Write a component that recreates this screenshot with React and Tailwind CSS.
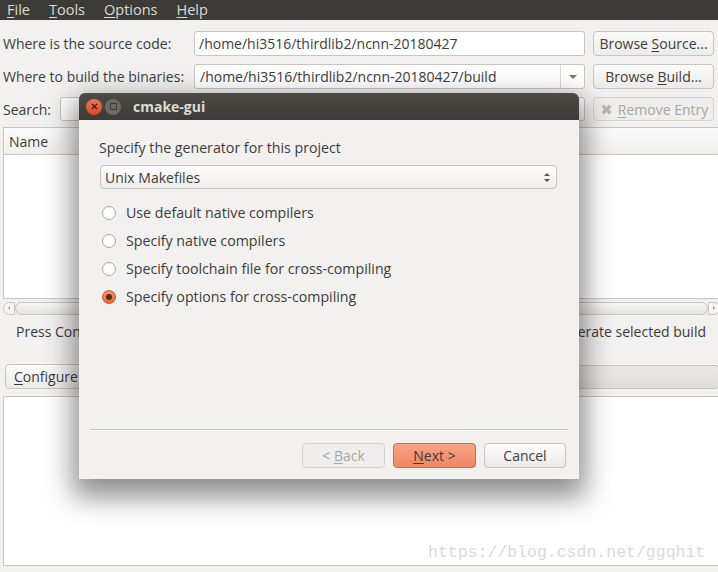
import { X } from "lucide-react";

const font = { fontFamily: '"Open Sans", "Noto Sans", sans-serif' };

const U = ({ children }) => <span className="underline underline-offset-2">{children}</span>;

const Btn = ({ children, className = "" }) => (
  <button
    className={`h-[25px] rounded-[4px] border border-[#c8c5c0] bg-gradient-to-b from-[#fbfbfa] to-[#ecebe9] text-[14px] text-[#3c3c3c] flex items-center justify-center ${className}`}>
    <span className="whitespace-pre">{children}</span>
  </button>
);

const Radio = ({ checked, label }) => (
  <div className="h-[28px] flex items-center gap-[10px] pl-[2px]">
    {checked ? (
      <span className="w-[14px] h-[14px] rounded-full bg-gradient-to-b from-[#f5946d] to-[#e8643a] border border-[#c9532e] flex items-center justify-center">
        <span className="w-[6px] h-[6px] rounded-full bg-[#5a2a1a]" />
      </span>
    ) : (
      <span className="w-[14px] h-[14px] rounded-full bg-white border border-[#a9a6a1]" />
    )}
    <span className="text-[14.2px]">{label}</span>
  </div>
);

const Dialog = () => (
  <div className="absolute left-[79px] top-[93px] w-[500px] h-[386px] rounded-t-[6px] shadow-[0_12px_28px_6px_rgba(0,0,0,0.45)] flex flex-col text-[14px] text-[#3c3c3c]">
    <div className="h-[27px] rounded-t-[6px] bg-gradient-to-b from-[#4d4b45] to-[#3c3b37] flex items-center pl-[7px]">
      <span className="w-[16px] h-[16px] rounded-full bg-gradient-to-b from-[#f27450] to-[#d9481f] flex items-center justify-center text-[#3a1a10]">
        <X size={9} strokeWidth={3} />
      </span>
      <span className="ml-[3px] w-[16px] h-[16px] rounded-full bg-[#6b6a65] flex items-center justify-center">
        <span className="w-[7px] h-[7px] border border-[#3c3b37]" />
      </span>
      <span className="ml-[12px] font-bold text-[#dfdbd2] text-[14px]">cmake-gui</span>
    </div>
    <div className="flex-1 bg-[#f2f1f0] flex flex-col">
      <div className="pl-[20px] pt-[19px] leading-[18px] text-[14.2px]">Specify the generator for this project</div>
      <div className="ml-[21px] mt-[8px] w-[457px] h-[24px] rounded-[4px] border border-[#c8c5c0] bg-gradient-to-b from-[#fdfdfd] to-[#efeeec] flex items-center justify-between pl-[4px] pr-[6px]">
        <span>Unix Makefiles</span>
        <span className="flex flex-col gap-[3px]">
          <span className="w-0 h-0 border-l-[3px] border-r-[3px] border-b-[3px] border-l-transparent border-r-transparent border-b-[#555]" />
          <span className="w-0 h-0 border-l-[3px] border-r-[3px] border-t-[3px] border-l-transparent border-r-transparent border-t-[#555]" />
        </span>
      </div>
      <div className="ml-[21px] mt-[10px] flex flex-col">
        <Radio label="Use default native compilers" />
        <Radio label="Specify native compilers" />
        <Radio label="Specify toolchain file for cross-compiling" />
        <Radio checked label="Specify options for cross-compiling" />
      </div>
      <div className="flex-1" />
      <div className="mx-[11px] border-t border-[#c8c5c0] shadow-[0_1px_0_#ffffff]" />
      <div className="flex justify-end gap-[8px] pr-[13px] pt-[13px] pb-[11px]">
        <button className="w-[83px] h-[25px] rounded-[4px] border border-[#d6d3cf] bg-[#efeeec] text-[#a9a7a3]">
          &lt; <U>B</U>ack
        </button>
        <button className="w-[83px] h-[25px] rounded-[4px] border border-[#cf6a45] bg-gradient-to-b from-[#f7a487] to-[#ef8661] text-[#3c3c3c]">
          <U>N</U>ext &gt;
        </button>
        <Btn className="w-[82px]">Cancel</Btn>
      </div>
    </div>
  </div>
);

export default function App() {
  return (
    <div className="relative w-[718px] h-[572px] overflow-hidden bg-[#f2f1f0] text-[14px] text-[#3c3c3c]" style={font}>
      <div className="h-[20px] bg-[#3c3b37] text-[#dfdbd2] text-[14.5px] flex items-center gap-[19px] pl-[7px]">
        <span><U>F</U>ile</span>
        <span><U>T</U>ools</span>
        <span><U>O</U>ptions</span>
        <span><U>H</U>elp</span>
      </div>

      <div className="flex flex-col pl-[3px] pr-[4px]">
        <div className="mt-[11px] flex items-center h-[25px]">
          <span className="w-[191px]">Where is the source code:</span>
          <div className="w-[391px] h-[25px] rounded-[3px] border border-[#c8c5c0] bg-white flex items-center pl-[4px]">
            /home/hi3516/thirdlib2/ncnn-20180427
          </div>
          <Btn className="ml-[8px] w-[121px]">
            Browse <U>S</U>ource...
          </Btn>
        </div>

        <div className="mt-[8px] flex items-center h-[25px]">
          <span className="w-[191px]">Where to build the binaries:</span>
          <div className="w-[391px] h-[25px] rounded-[3px] border border-[#c8c5c0] bg-white flex items-center">
            <span className="flex-1 pl-[5px]">/home/hi3516/thirdlib2/ncnn-20180427/build</span>
            <span className="w-[24px] h-full border-l border-[#dcdad6] flex items-center justify-center">
              <span className="w-0 h-0 border-l-[4px] border-r-[4px] border-t-[4px] border-l-transparent border-r-transparent border-t-[#7a7875]" />
            </span>
          </div>
          <Btn className="ml-[8px] w-[121px]">
            Browse <U>B</U>uild...
          </Btn>
        </div>

        <div className="mt-[8px] flex items-center h-[24px]">
          <span className="w-[57px]">Search:</span>
          <div className="w-[525px] h-[24px] rounded-[3px] border border-[#c8c5c0] bg-white" />
          <button className="ml-[8px] w-[121px] h-[24px] rounded-[4px] border border-[#d6d3cf] bg-[#efeeec] text-[#a9a7a3] flex items-center justify-center gap-[4px]">
            <X size={15} strokeWidth={5.5} strokeLinecap="butt" className="text-[#b8b6b3]" />
            <span><U>R</U>emove Entry</span>
          </button>
        </div>

        <div className="mt-[6px] h-[172px] mr-[-6px] border border-[#c8c5c0] bg-white flex flex-col">
          <div className="h-[27px] border-b border-[#c8c5c0] bg-gradient-to-b from-[#fafafa] to-[#f0efee] flex items-center pl-[5px]">
            Name
          </div>
        </div>

        <div className="mt-[2px] h-[14px] mr-[-6px] flex items-center">
          <span className="w-[12px] h-[13px] rounded-l-full border border-[#c8c5c0] bg-[#f6f5f4] flex items-center justify-center">
            <span className="w-0 h-0 border-t-[2px] border-b-[2px] border-r-[2px] border-t-transparent border-b-transparent border-r-[#999]" />
          </span>
          <span className="flex-1 h-[13px] rounded-full border border-[#c8c5c0] bg-gradient-to-b from-[#f7f7f6] to-[#e4e3e1]" />
          <span className="w-[12px] h-[13px] rounded-r-full border border-[#c8c5c0] bg-[#f6f5f4] flex items-center justify-center">
            <span className="w-0 h-0 border-t-[2px] border-b-[2px] border-l-[2px] border-t-transparent border-b-transparent border-l-[#999]" />
          </span>
        </div>

        <div className="mt-[5px] h-[22px] flex items-center justify-between pl-[13px] pr-[8px] whitespace-nowrap">
          <span>Press Configure to update and display new values in red, then</span>
          <span>press Generate to generate selected build</span>
        </div>

        <div className="mt-[22px] h-[25px] flex items-center gap-[6px] pl-[2px]">
          <Btn className="w-[90px] justify-start pl-[8px]">
            <U>C</U>onfigure
          </Btn>
          <div className="flex-1 mr-[-6px] h-[24px] rounded-[5px] border border-[#c8c5c0] bg-gradient-to-b from-[#e9e8e6] to-[#dfdedc]" />
        </div>

        <div className="mt-[7px] h-[170px] mr-[-6px] border border-[#c8c5c0] bg-white" />
      </div>

      <div
        className="absolute left-[428px] top-[541px] text-[16.5px] leading-[24px] text-[#dadada]"
        style={{ fontFamily: '"Liberation Mono", monospace' }}>
        https://blog.csdn.net/ggqhit
      </div>

      <Dialog />
    </div>
  );
}
